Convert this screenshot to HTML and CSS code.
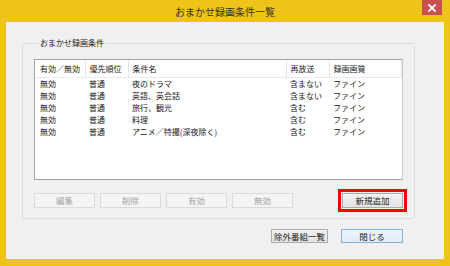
FILE: index.html
```html
<!DOCTYPE html>
<html lang="ja">
<head>
  <meta charset="UTF-8" />
  <title>おまかせ録画条件一覧</title>
  <link rel="stylesheet" href="styles.css">
</head>
<body>
  <div class="window">
    <div class="titlebar">
      <span></span>
      <span class="title">おまかせ録画条件一覧</span>
      <button class="close-btn" aria-label="閉じる">
        <svg width="8" height="8" viewBox="0 0 8 8">
          <path d="M1 1 L7 7 M7 1 L1 7" stroke="#fff" stroke-width="1.8" stroke-linecap="square" />
        </svg>
      </button>
    </div>

    <div class="client">
      <fieldset class="group">
        <legend>おまかせ録画条件</legend>

        <div class="listview">
          <table>
            <colgroup>
              <col class="c-enabled">
              <col class="c-priority">
              <col class="c-name">
              <col class="c-rerun">
              <col>
            </colgroup>
            <thead>
              <tr>
                <th>有効／無効</th>
                <th>優先順位</th>
                <th>条件名</th>
                <th>再放送</th>
                <th>録画画質</th>
              </tr>
            </thead>
            <tbody>
              <tr><td>無効</td><td>普通</td><td>夜のドラマ</td><td>含まない</td><td>ファイン</td></tr>
              <tr><td>無効</td><td>普通</td><td>英語、英会話</td><td>含まない</td><td>ファイン</td></tr>
              <tr><td>無効</td><td>普通</td><td>旅行、観光</td><td>含む</td><td>ファイン</td></tr>
              <tr><td>無効</td><td>普通</td><td>料理</td><td>含む</td><td>ファイン</td></tr>
              <tr><td>無効</td><td>普通</td><td>アニメ／特撮(深夜除く)</td><td>含む</td><td>ファイン</td></tr>
            </tbody>
          </table>
        </div>

        <div class="group-actions">
          <button class="btn" disabled>編集</button>
          <button class="btn" disabled>削除</button>
          <button class="btn" disabled>有効</button>
          <button class="btn" disabled>無効</button>
          <button class="btn btn-new">新規追加</button>
        </div>
      </fieldset>

      <div class="dialog-actions">
        <button class="btn btn-exclude">除外番組一覧</button>
        <button class="btn btn-default">閉じる</button>
      </div>
    </div>
  </div>
</body>
</html>
```

FILE: styles.css
```css
body {
  margin: 0;
  font-family: "Noto Sans CJK JP", "Noto Sans", sans-serif;
  color: #1a1a1a;
  background: #eec41a;
}
.window {
  width: 450px;
  height: 266px;
  box-sizing: border-box;
  padding: 0 6px 7px 6px;
  background: #eec41a;
  display: flex;
  flex-direction: column;
}
.titlebar {
  height: 22px;
  display: grid;
  grid-template-columns: 1fr auto 1fr;
  align-items: start;
}
.title {
  font-size: 10px;
  line-height: 24px;
  color: #3a3216;
}
.close-btn {
  justify-self: end;
  width: 20px;
  height: 15px;
  margin-right: 2px;
  padding: 0;
  border: none;
  background: #c75050;
  display: flex;
  align-items: center;
  justify-content: center;
}
.client {
  flex: 1;
  background: #f0f0f0;
  padding: 15px 29px 0 16px;
  display: flex;
  flex-direction: column;
}
.group {
  margin: 0;
  padding: 10px 11px 10px 11px;
  border: 1px solid #dcdcdc;
  border-radius: 2px;
}
.group legend {
  font-size: 8px;
  line-height: 12px;
  padding: 0 1px;
  margin-left: 5px;
}
.listview {
  height: 121px;
  box-sizing: border-box;
  background: #fff;
  border: 1px solid #a3a3a3;
  border-right-color: #c8c8c8;
}
.listview table {
  width: 100%;
  border-collapse: collapse;
  table-layout: fixed;
  font-size: 8px;
}
.c-enabled { width: 50px; }
.c-priority { width: 43px; }
.c-name { width: 158px; }
.c-rerun { width: 43px; }
.listview th {
  height: 17px;
  padding: 0 0 0 4px;
  text-align: left;
  font-weight: normal;
  border-right: 1px solid #e5e5e5;
  border-bottom: 1px solid #eaeaea;
  white-space: nowrap;
}
.listview td {
  height: 12px;
  line-height: 12px;
  padding: 0 0 0 4px;
  white-space: nowrap;
}
.listview th:first-child,
.listview td:first-child {
  padding-left: 5px;
}
.group-actions {
  display: flex;
  gap: 5px;
  margin-top: 13px;
}
.btn {
  width: 61px;
  height: 15px;
  padding: 0;
  font-family: inherit;
  font-size: 8.5px;
  line-height: 13px;
  color: #1a1a1a;
  border: 1px solid #acacac;
  background: linear-gradient(#f2f2f2, #e3e3e3);
}
.btn:disabled {
  color: #a3a3a3;
  border-color: #dadada;
  background: #f4f4f4;
}
.btn-new {
  margin-left: auto;
  outline: 3px solid #ff0000;
  outline-offset: 1px;
}
.dialog-actions {
  display: flex;
  justify-content: flex-end;
  gap: 13px;
  margin-top: 10px;
  padding-right: 12px;
}
.dialog-actions .btn {
  height: 14px;
  line-height: 12px;
}
.btn-exclude {
  width: 57px;
}
.btn-default {
  width: 62px;
  border-color: #7db4ea;
  background: linear-gradient(#eef5fc, #e0ebf7);
}
```
